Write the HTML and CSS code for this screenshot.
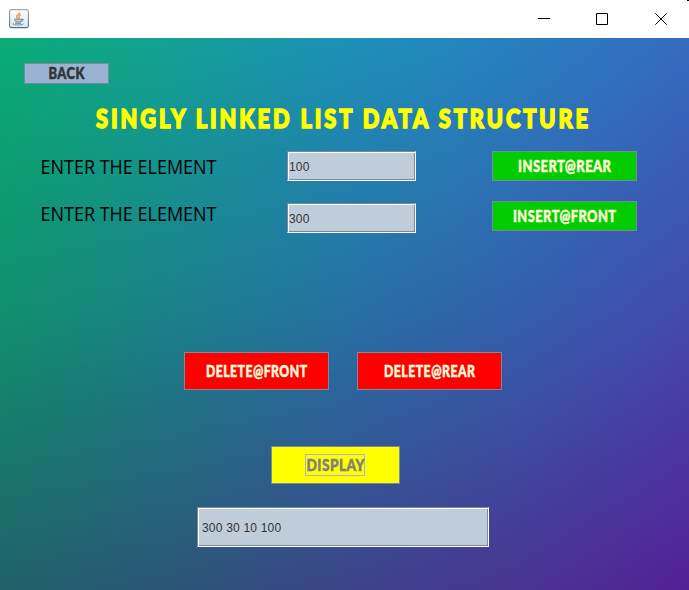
FILE: index.html
```html
<!DOCTYPE html>
<html lang="en">
<head>
<meta charset="utf-8">
<title>Singly Linked List</title>
<link rel="stylesheet" href="styles.css">
</head>
<body>
<div class="window">
  <header class="titlebar">
    <svg class="java" width="20" height="20" viewBox="0 0 20 20">
      <defs><linearGradient id="tile" x2="0" y2="1"><stop stop-color="#fff"/><stop offset="1" stop-color="#dfe5e9"/></linearGradient>
      <linearGradient id="edge" x2="0" y2="1"><stop stop-color="#9aa9b4"/><stop offset="1" stop-color="#55707f"/></linearGradient></defs>
      <rect x=".6" y=".6" width="18.8" height="18" rx="1.8" fill="url(#tile)" stroke="url(#edge)" stroke-width="1.1"/>
      <path d="M10.6 3.3C11.4 5 7.2 6 7.6 7.8c.1.8.9 1.2 1.4 1.9M12 5.6c-1.6.7-2.6 1.4-2 2.3.4.7.5 1.2-.2 1.8" fill="none" stroke="#ef9750" stroke-width="1.4"/>
      <path d="M5.3 10h7.5l-.6 3.2H6.7zM12.8 10.2c2.6-.7 2.3 1.7-.4 2.1" fill="#91a9bc" stroke="#7d9ab0" stroke-width=".8"/>
      <path d="M6.2 11.6h6" stroke="#e6edf2" stroke-width=".7"/>
      <path d="M4.6 14.2c-2 .9.2 1.7 4.6 1.7 3.4 0 5.3-.5 5.4-1.2M6 14.4h6" fill="none" stroke="#7894aa"/>
    </svg>
    <div class="controls">
      <svg width="12" height="12" viewBox="0 0 12 12"><path d="M0 5.5h12"/></svg>
      <svg width="12" height="12" viewBox="0 0 12 12"><path d="M.5.5h11v11H.5z"/></svg>
      <svg class="close" width="12" height="12" viewBox="0 0 12 12"><path d="M.3.3l11.4 11.4M11.7.3L.3 11.7"/></svg>
    </div>
    <i class="speck"></i>
  </header>
  <main class="panel">
    <button class="btn back"><svg width="83" height="19"><text x="23.5" y="15" textLength="36.5" lengthAdjust="spacingAndGlyphs">BACK</text></svg></button>
    <h1 class="heading"><svg width="689" height="34"><text x="96" y="26" textLength="495" lengthAdjust="spacingAndGlyphs">SINGLY LINKED LIST DATA STRUCTURE</text></svg></h1>
    <section class="entry">
      <div class="labels">
        <svg width="200" height="30"><text x="0.5" y="23" textLength="176" lengthAdjust="spacingAndGlyphs">ENTER THE ELEMENT</text></svg>
        <svg width="200" height="30"><text x="0.5" y="23" textLength="176" lengthAdjust="spacingAndGlyphs">ENTER THE ELEMENT</text></svg>
      </div>
      <div class="fields">
        <div class="field"><span>100</span></div>
        <div class="field"><span>300</span></div>
      </div>
      <div class="inserts">
        <button class="btn insert"><svg width="143" height="28"><text x="25" y="20" textLength="93.5" lengthAdjust="spacingAndGlyphs">INSERT@REAR</text></svg></button>
        <button class="btn insert"><svg width="143" height="28"><text x="20" y="20" textLength="103.5" lengthAdjust="spacingAndGlyphs">INSERT@FRONT</text></svg></button>
      </div>
    </section>
    <section class="deletes">
      <button class="btn delete"><svg width="143" height="36"><text x="21" y="24" textLength="101.5" lengthAdjust="spacingAndGlyphs">DELETE@FRONT</text></svg></button>
      <button class="btn delete"><svg width="143" height="36"><text x="26" y="24" textLength="91.5" lengthAdjust="spacingAndGlyphs">DELETE@REAR</text></svg></button>
    </section>
    <button class="btn display"><span class="focus"><svg width="58" height="20"><text x=".5" y="16" textLength="58.5" lengthAdjust="spacingAndGlyphs">DISPLAY</text></svg></span></button>
    <div class="field output"><span>300 30 10 100</span></div>
  </main>
</div>
</body>
</html>
```
FILE: styles.css
```css
* { box-sizing: border-box; }
body { margin: 0; overflow: hidden; }
svg { display: block; overflow: visible; }
.window { width: 689px; height: 590px; display: flex; flex-direction: column; }
.titlebar {
  position: relative;
  height: 38px;
  flex: none;
  background: #fff;
  display: flex;
  align-items: center;
  justify-content: space-between;
  padding: 0 22px 0 9px;
}
.controls { display: flex; gap: 46px; }
.controls svg { fill: none; stroke: #000; stroke-width: 1; }
.controls .close { margin-left: 1px; }
.speck { position: absolute; top: 0; right: 0; width: 2px; height: 1px; background: #000; }

/* Three horizontal colour rows blended vertically. */
.panel {
  position: relative;
  isolation: isolate;
  flex: 1;
  display: flex;
  flex-direction: column;
  background: linear-gradient(90deg, #10906c, #1b808a 25%, #2671a3 50%, #345fac 75%, #4449ae);
}
.panel::before, .panel::after { content: ""; position: absolute; inset: 0; z-index: -1; }
.panel::before {
  background: linear-gradient(90deg, #0aab74, #12a291 22%, #1b92b4 47%, #2388be 65%, #346bc0);
  -webkit-mask-image: linear-gradient(#000, transparent 50%);
  mask-image: linear-gradient(#000, transparent 50%);
}
.panel::after {
  background: linear-gradient(90deg, #20616a, #2c5576 25%, #3d4489 50%, #493492 75%, #542094);
  -webkit-mask-image: linear-gradient(transparent 50%, #000);
  mask-image: linear-gradient(transparent 50%, #000);
}

.btn {
  display: flex;
  align-items: center;
  justify-content: center;
  padding: 0;
  border: 1px solid #7a8a99;
  border-radius: 0;
}
.btn text {
  font: 900 16.5px Lato, sans-serif;
  letter-spacing: 0.6px;
  fill: #fffbd8;
  stroke: #fffbd8;
  stroke-width: 0.5px;
}
.back { width: 85px; height: 21px; margin: 25px 0 0 24px; background: #9ab3d2; }
.back text { fill: #333; stroke: #333; }
.heading { margin: 18px 0 0; height: 34px; }
.heading text {
  font: 900 26px Lato, sans-serif;
  letter-spacing: 3.5px;
  fill: #ff0;
  stroke: #ff0;
  stroke-width: 1.6px;
}

.entry { display: flex; margin-top: 15px; padding-left: 40px; }
.labels { width: 247px; display: flex; flex-direction: column; gap: 17px; }
.labels text { font: 19.5px "Open Sans", sans-serif; fill: #000; }
.fields { width: 205px; display: flex; flex-direction: column; gap: 22px; }
.inserts { display: flex; flex-direction: column; gap: 20px; }
.field {
  width: 129px;
  height: 30px;
  display: flex;
  align-items: center;
  border: 1px solid;
  border-color: #7a8a99 #fff #fff #7a8a99;
  box-shadow: inset 1px 1px #fff, inset -1px -1px #7a8a99;
  background: #bfcddb;
  color: #333;
  font: 12px "Liberation Sans", sans-serif;
  letter-spacing: 0.2px;
  padding: 1px 1px 0;
}
.insert { width: 145px; height: 30px; background: #0c0; }

.deletes { display: flex; gap: 28px; margin: 119px 0 0 184px; }
.delete { width: 145px; height: 38px; background: #f00; }
.display { width: 129px; height: 38px; margin: 56px 0 0 271px; background: #ff0; }
.display text { fill: #808080; stroke: #808080; }
.focus { border: 1px solid #a3b8cc; margin-right: 1px; }
.output { width: 292px; height: 40px; margin: 23px 0 0 197px; padding-left: 4px; }
```
